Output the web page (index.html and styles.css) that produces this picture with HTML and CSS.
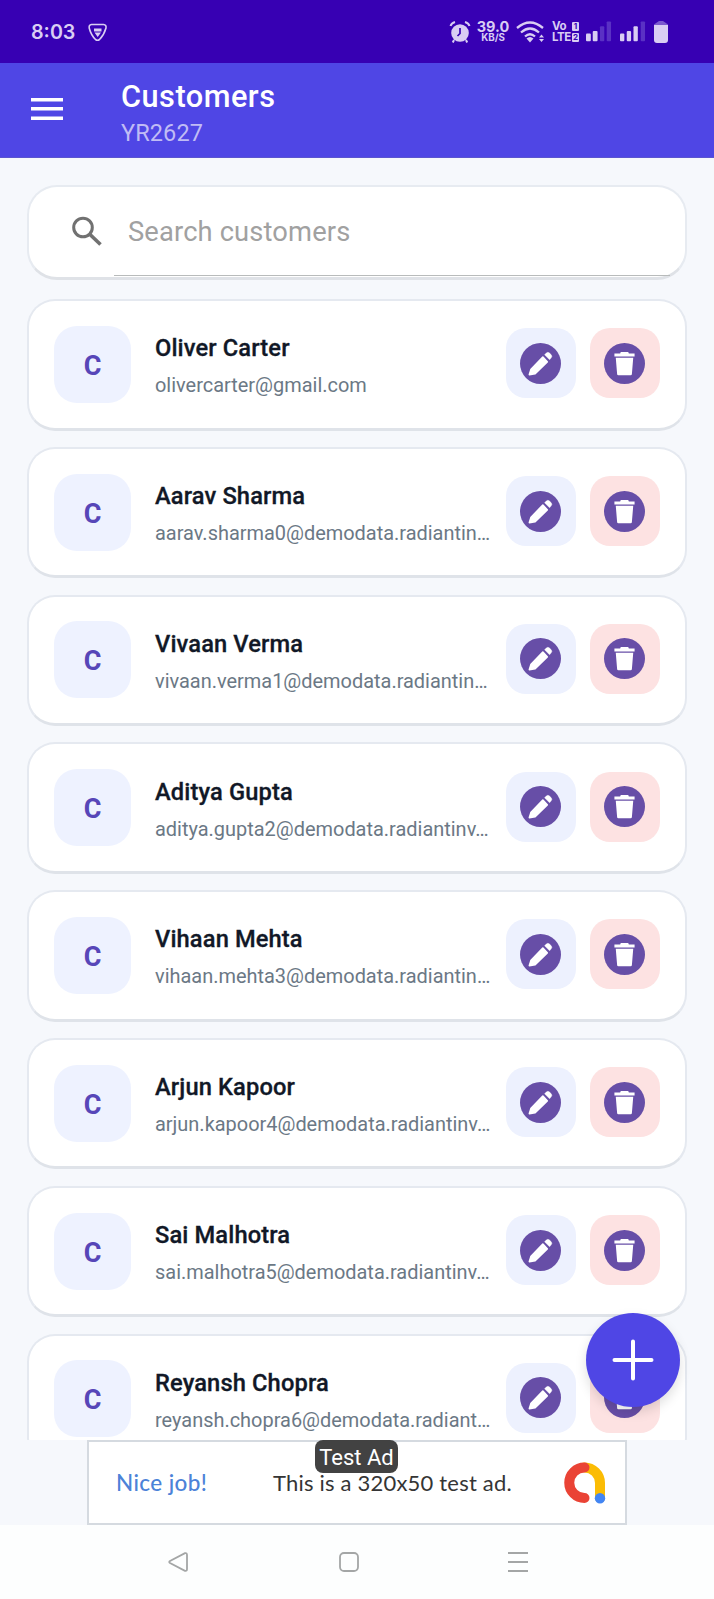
FILE: index.html
```html
<!DOCTYPE html>
<html lang="en">
<head>
<meta charset="utf-8">
<title>Customers</title>
<link rel="stylesheet" href="styles.css">
</head>
<body>
<svg class="defs" width="0" height="0" aria-hidden="true">
  <symbol id="edit" viewBox="0 0 122 122">
    <circle cx="61" cy="61" r="61" fill="#674ea7"/>
    <path d="M28 94l5-16 35-36 13 14-36 35z" fill="#fff" stroke="#fff" stroke-width="5" stroke-linejoin="round"/>
    <path d="M73 35l5-5q5-5 10 0l5 5q4 5 0 9l-5 6z" fill="#fff" stroke="#fff" stroke-width="1"/>
  </symbol>
  <symbol id="trash" viewBox="0 0 122 122">
    <circle cx="61" cy="61" r="61" fill="#674ea7"/>
    <path d="M31 31h17l2-4h22l2 4h17v9H31zM35 44h52l-4 48q0 4-4 4H43q-4 0-4-4z" fill="#fff"/>
  </symbol>
</svg>
<div class="screen">
  <div class="status">
    <span class="clock">8:03</span>
    <svg class="shield" width="20" height="19" viewBox="0 0 20 19" fill="none" stroke="#d9cdf3" stroke-width="1.6" stroke-linejoin="round"><path d="M3.5 1.5h12q3 .2 2.500 3.500-2 7-6.500 11.500-2 1.500-4 0Q3 12 1.200 5q-.4-3.300 2.300-3.500z"/><path d="M6 5.500h7.500v3H6zM6.500 9.500h6.500l-3.300 4.500z" fill="#d9cdf3" stroke="none"/></svg>
    <svg class="alarm" width="22" height="22" viewBox="0 0 22 22"><circle cx="11" cy="12" r="8.800" fill="#d9cdf3"/><path d="M1.500 5q1-3 4.500-4M20.500 5q-1-3-4.500-4M5 19l-1.200 2.500M17 19l1.200 2.500" stroke="#d9cdf3" stroke-width="2" fill="none"/><path d="M11 7v5.500L8.500 15" stroke="#3700b3" stroke-width="1.700" fill="none"/></svg>
    <span class="rate"><b>39.0</b><i>KB/S</i></span>
    <svg class="wifi" width="29" height="22" viewBox="0 0 29 22" fill="none" stroke="#d9cdf3" stroke-width="2.300"><path d="M1 7Q14 -4 27 7M5 11.500q9-8 18 0M9 15.500q5-4.500 10 0"/><path d="M10.500 17.500q3.500-3 7 0L14 21.500z" fill="#d9cdf3" stroke="none"/><path d="M23 16.500l2.500-3 2.500 3zM23 18h5l-2.500 3z" fill="#d9cdf3" stroke="none"/></svg>
    <span class="volte"><b>Vo <em>1</em></b><b>LTE<em>2</em></b></span>
    <svg class="sig" width="26" height="21" viewBox="0 0 27 21"><g fill="#d9cdf3"><rect x="0" y="12.500" width="5" height="8" rx="1"/><rect x="7" y="10" width="5" height="10.500" rx="1"/></g><g fill="#5a31c4"><rect x="14.500" y="5" width="4.500" height="15.500" rx="1"/><rect x="21.500" y="0" width="4.500" height="20.500" rx="1"/></g></svg>
    <svg class="sig sig-b" width="26" height="21" viewBox="0 0 27 21"><g fill="#d9cdf3"><rect x="0" y="12.500" width="4.500" height="8" rx="1"/><rect x="7" y="10" width="4.500" height="10.500" rx="1"/><rect x="14" y="5" width="4.500" height="15.500" rx="1"/></g><rect x="21.500" y="0" width="4.500" height="20.500" rx="1" fill="#5a31c4"/></svg>
    <svg class="batt" width="14" height="22" viewBox="0 0 14 22"><path d="M0 4q0-1 1-1.200L5 0h4l4 2.800q1 .2 1 1.200z" fill="#7b58ce"/><path d="M0 4h14v15q0 3-3 3H3q-3 0-3-3z" fill="#d9cdf3"/></svg>
  </div>

  <header class="appbar">
    <svg width="32" height="24" viewBox="0 0 32 24" fill="#fff"><path d="M0 1h32v3.400H0zM0 10h32v3.400H0zM0 19.500h32v3.400H0z"/></svg>
    <div class="titles"><h1>Customers</h1><p>YR2627</p></div>
  </header>

  <main class="list">
    <label class="search">
      <svg width="30" height="30" viewBox="0 0 30 30" fill="none" stroke="#717171"><circle cx="11" cy="11.500" r="9.300" stroke-width="3"/><path d="M17.500 18l11 10.500" stroke-width="3.600"/></svg>
      <span class="field">Search customers</span>
    </label>
    <article class="card"><div class="avatar">C</div><div class="who"><h2>Oliver Carter</h2><p>olivercarter@gmail.com</p></div><div class="btn edit"><svg><use href="#edit"/></svg></div><div class="btn del"><svg><use href="#trash"/></svg></div></article>
    <article class="card"><div class="avatar">C</div><div class="who"><h2>Aarav Sharma</h2><p>aarav.sharma0@demodata.radiantin…</p></div><div class="btn edit"><svg><use href="#edit"/></svg></div><div class="btn del"><svg><use href="#trash"/></svg></div></article>
    <article class="card"><div class="avatar">C</div><div class="who"><h2>Vivaan Verma</h2><p>vivaan.verma1@demodata.radiantin…</p></div><div class="btn edit"><svg><use href="#edit"/></svg></div><div class="btn del"><svg><use href="#trash"/></svg></div></article>
    <article class="card"><div class="avatar">C</div><div class="who"><h2>Aditya Gupta</h2><p>aditya.gupta2@demodata.radiantinv…</p></div><div class="btn edit"><svg><use href="#edit"/></svg></div><div class="btn del"><svg><use href="#trash"/></svg></div></article>
    <article class="card"><div class="avatar">C</div><div class="who"><h2>Vihaan Mehta</h2><p>vihaan.mehta3@demodata.radiantin…</p></div><div class="btn edit"><svg><use href="#edit"/></svg></div><div class="btn del"><svg><use href="#trash"/></svg></div></article>
    <article class="card"><div class="avatar">C</div><div class="who"><h2>Arjun Kapoor</h2><p>arjun.kapoor4@demodata.radiantinv…</p></div><div class="btn edit"><svg><use href="#edit"/></svg></div><div class="btn del"><svg><use href="#trash"/></svg></div></article>
    <article class="card"><div class="avatar">C</div><div class="who"><h2>Sai Malhotra</h2><p>sai.malhotra5@demodata.radiantinv…</p></div><div class="btn edit"><svg><use href="#edit"/></svg></div><div class="btn del"><svg><use href="#trash"/></svg></div></article>
    <article class="card"><div class="avatar">C</div><div class="who"><h2>Reyansh Chopra</h2><p>reyansh.chopra6@demodata.radiant…</p></div><div class="btn edit"><svg><use href="#edit"/></svg></div><div class="btn del"><svg><use href="#trash"/></svg></div></article>
    <div class="fab"><svg width="42" height="42" viewBox="0 0 42 42" stroke="#fff" stroke-width="4" stroke-linecap="round"><path d="M21 2.500v37M2.500 21h37"/></svg></div>
  </main>

  <div class="adrow">
    <div class="ad">
      <span class="nice">Nice job!</span>
      <span class="msg">This is a 320x50 test ad.</span>
      <svg width="42" height="42" viewBox="0 0 42 42" fill="none" stroke-width="10" stroke-linecap="round"><path d="M20.500 5.500a15.500 15.500 0 0 1 15.500 15.500v15" stroke="#fbbc04"/><path d="M20.500 5.500a15.200 15.200 0 0 0 0 30.500" stroke="#ea4335"/><circle cx="36" cy="36.300" r="5.200" fill="#4285f4"/></svg>
      <span class="tag">Test Ad</span>
    </div>
  </div>

  <nav class="sysnav">
    <svg width="20" height="20" viewBox="0 0 20 20"><path d="M17 1.200Q19 .500 19 3v14q0 2.500-2 1.800L2 11q-1.500-1 0-2z"/></svg>
    <svg width="20" height="20" viewBox="0 0 20 20"><rect x="1" y="1" width="18" height="18" rx="4"/></svg>
    <svg width="20" height="20" viewBox="0 0 20 20"><path d="M0 1h20M0 10h20M0 19h20"/></svg>
  </nav>
</div>
</body>
</html>
```

FILE: styles.css
```css
* { box-sizing: border-box; margin: 0; padding: 0; }
body { font-family: Roboto, sans-serif; background: #f6f8fc; }
svg { display: block; flex: none; }
.defs { position: absolute; }
.screen { width: 714px; height: 1599px; overflow: hidden; display: flex; flex-direction: column; }

.status { height: 63px; flex: none; background: #3700b3; color: #d9cdf3; display: flex; align-items: center; padding: 0 46px 0 31px; font-family: Inter, sans-serif; }
.clock { font-size: 19.700px; font-weight: 600; width: 57px; line-height: 20px; white-space: nowrap; padding-top: 1px; }
.shield { margin-top: 2px; }
.alarm { margin-left: auto; }
.rate { display: flex; flex-direction: column; align-items: center; width: 32px; margin-left: 6px; white-space: nowrap; }
.rate b { font-size: 14.500px; line-height: 12px; font-weight: 700; }
.rate i { font-size: 9.800px; line-height: 10px; font-style: normal; font-weight: 700; }
.wifi { margin-left: 7px; }
.volte { display: flex; flex-direction: column; width: 27px; margin-left: 7px; white-space: nowrap; }
.volte b { display: flex; justify-content: space-between; align-items: center; font-size: 11.500px; line-height: 11px; font-weight: 700; letter-spacing: -.4px; }
.volte em { font-style: normal; font-size: 8px; line-height: 9px; width: 7px; text-align: center; background: #d9cdf3; color: #3700b3; border-radius: 1px; letter-spacing: 0; }
.sig { margin-left: 7px; }
.sig-b { margin-left: 8px; }
.batt { margin-left: 8px; }

.appbar { height: 95px; flex: none; background: #4f46e5; color: #fff; display: flex; align-items: center; padding: 0 31px; gap: 58px; border-bottom: 1px solid #5b55cf; }
.appbar svg { margin-top: -2px; }
.titles { padding-top: 9px; }
.titles h1 { font-size: 30.700px; line-height: 37px; font-weight: 500; letter-spacing: .5px; }
.titles p { font-size: 23.500px; line-height: 37px; color: #c0bcf5; letter-spacing: .1px; }

.list { position: relative; height: 1282px; flex: none; overflow: hidden; padding: 27px 27px 0; display: flex; flex-direction: column; }
.search { flex: none; height: 94.500px; margin-bottom: 19.500px; background: #fff; border: 2px solid #e7ebf1; border-bottom: 3px solid #dfe2e7; border-radius: 30px; padding: 0 15px 0 43px; display: flex; }
.search svg { margin-top: 29px; }
.field { flex: 1; margin-left: 12px; margin-bottom: 1px; padding: 23px 0 0 14px; font-size: 27.300px; letter-spacing: .15px; line-height: 44px; color: #a1a1a1; border-bottom: 1px solid #b8bbbb; }
.card { flex: none; height: 131.500px; margin-bottom: 16.300px; background: #fff; border: 2px solid #e5e9f0; border-bottom: 3px solid #dfe3e9; border-radius: 28px; padding: 0 25px 0 25px; display: flex; align-items: center; }
.avatar { width: 77px; height: 77px; border-radius: 23px; background: #eef2ff; color: #5746b8; font-size: 27px; font-weight: 700; display: flex; align-items: center; justify-content: center; padding-top: 3px; }
.who { flex: 1; min-width: 0; padding: 6px 0 0 24px; white-space: nowrap; }
.who h2 { font-size: 23.700px; line-height: 36px; font-weight: 500; letter-spacing: .12px; color: #111827; -webkit-text-stroke: .3px #111827; }
.who p { font-size: 19.950px; line-height: 38px; color: #6b7885; }
.btn { width: 70px; height: 70px; margin-bottom: 2px; border-radius: 20px; display: flex; align-items: center; justify-content: center; }
.btn svg { width: 41px; height: 41px; margin-right: 1px; }
.edit { background: #edf1fe; }
.del { background: #fde2e2; margin-left: 14px; }
.fab { position: absolute; left: 586px; top: 1154.500px; width: 94px; height: 94px; border-radius: 50%; background: #4f46e5; box-shadow: 0 5px 12px rgba(0,0,0,.13); display: flex; align-items: center; justify-content: center; }

.adrow { height: 85px; flex: none; display: flex; justify-content: center; }
.ad { position: relative; width: 540px; height: 85px; background: #fff; border: 2px solid #d5dae0; display: flex; align-items: center; padding: 0 19px 0 27px; }
.nice { width: 157px; font-size: 22.500px; letter-spacing: .4px; font-weight: 500; color: #4c82d8; }
.msg { flex: 1; font-size: 22px; letter-spacing: .2px; color: #353535; white-space: nowrap; }
.nice, .msg { font-family: Lato, sans-serif; }
.tag { position: absolute; left: 226px; top: -2px; width: 83px; height: 33px; border-radius: 8px; background: #424242; color: #fff; font-size: 22px; line-height: 35px; text-align: center; white-space: nowrap; }

.sysnav { flex: 1; background: #fdfefe; display: grid; grid-template-columns: 171px 169px 20px; padding: 27px 0 0 168px; }
.sysnav svg { fill: none; stroke: #a4a6a6; stroke-width: 1.800; }
```
